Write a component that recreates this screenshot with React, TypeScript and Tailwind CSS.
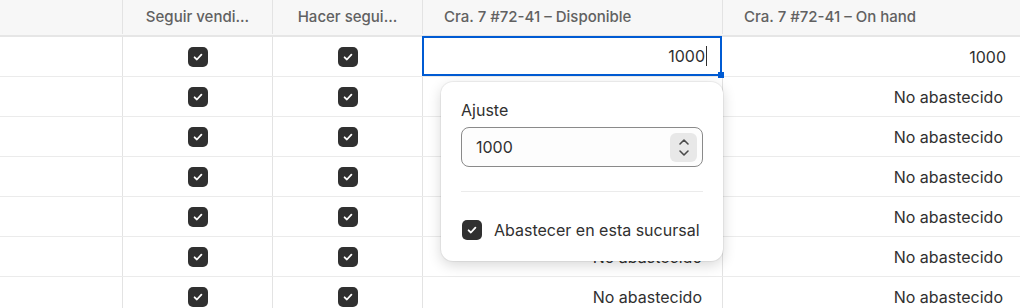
import React from 'react';

const font = { fontFamily: 'Inter, "Noto Sans", sans-serif' };

const Check: React.FC<{ className?: string }> = ({ className }) => (
  <span className={`flex h-5 w-5 shrink-0 items-center justify-center rounded-[5px] bg-[#303030] ${className ?? ''}`}>
    <svg width="12" height="12" viewBox="0 0 12 12" fill="none">
      <path d="M2.6 6.3 4.9 8.5 9.4 3.6" stroke="#fff" strokeWidth="1.8" strokeLinecap="round" strokeLinejoin="round" />
    </svg>
  </span>
);

const rows = Array.from({ length: 7 }, (_, i) => i);

const App: React.FC = () => {
  return (
    <div className="relative h-[308px] w-[1020px] overflow-hidden bg-white text-[#303030]" style={font}>
      {/* header */}
      <div className="flex h-[37px] border-b-2 border-[#e6e6e6] bg-[#f7f7f7] pb-px text-[15px] font-medium text-[#616161]">
        <div className="w-[123px] shrink-0 border-r border-[#e3e3e3]" />
        <div className="flex w-[150px] shrink-0 items-center justify-center border-r border-[#e3e3e3]">Seguir vendi...</div>
        <div className="flex w-[150px] shrink-0 items-center justify-center border-r border-[#e3e3e3]">Hacer segui...</div>
        <div className="flex w-[300px] shrink-0 items-center border-r border-[#e3e3e3] pl-[21px]">Cra. 7 #72-41 – Disponible</div>
        <div className="flex w-[300px] shrink-0 items-center pl-[21px]">Cra. 7 #72-41 – On hand</div>
      </div>

      {rows.map(i => (
        <div key={i} className="flex h-[40px] border-b border-[#ebebeb] text-[16px]">
          <div className="w-[123px] shrink-0 border-r border-[#e3e3e3]" />
          <div className="flex w-[150px] shrink-0 items-center justify-center border-r border-[#e3e3e3]">
            <Check />
          </div>
          <div className="flex w-[150px] shrink-0 items-center justify-center border-r border-[#e3e3e3]">
            <Check />
          </div>
          {i === 0 ? (
            <div className="relative flex w-[300px] shrink-0 items-center justify-end border-2 border-[#005bd3] pr-[13px] -mt-px -ml-px">
              <span>1000</span>
              <span className="ml-px h-[20px] w-px bg-[#303030]" />
              <span className="absolute -bottom-[4px] -right-[4px] h-[6px] w-[6px] bg-[#005bd3]" />
            </div>
          ) : (
            <div className="flex w-[300px] shrink-0 items-center justify-end border-r border-[#e3e3e3] pr-[20px]">
              No abastecido
            </div>
          )}
          <div className="flex w-[300px] shrink-0 items-center justify-end pr-[16px]">
            {i === 0 ? <span>1000</span> : <span className="pr-[4px]">No abastecido</span>}
          </div>
        </div>
      ))}

      {/* popover */}
      <div className="absolute left-[441px] top-[82px] flex h-[179px] w-[282px] flex-col rounded-[12px] bg-white px-5 pt-4 shadow-[0_4px_14px_rgba(0,0,0,0.16),0_0_0_1px_rgba(0,0,0,0.05)]">
        <div className="text-[16px] leading-6">Ajuste</div>
        <div className="mt-[5px] flex h-[40px] items-center rounded-[8px] border border-[#8a8a8a] bg-[#fdfdfd] pl-[14px] pr-[5px] text-[16px]">
          <span className="flex-1">1000</span>
          <span className="flex h-[29px] w-[27px] flex-col items-center justify-center rounded-[6px] bg-[#e8e8e8]">
            <svg width="12" height="8" viewBox="0 0 12 8" fill="none">
              <path d="M2 6 6 2l4 4" stroke="#4a4a4a" strokeWidth="1.6" strokeLinecap="round" strokeLinejoin="round" />
            </svg>
            <svg width="12" height="8" viewBox="0 0 12 8" fill="none" className="mt-[3px]">
              <path d="M2 2l4 4 4-4" stroke="#4a4a4a" strokeWidth="1.6" strokeLinecap="round" strokeLinejoin="round" />
            </svg>
          </span>
        </div>
        <div className="mt-6 h-px bg-[#ebebeb]" />
        <div className="mt-[26px] flex h-6 items-center gap-3 whitespace-nowrap pl-px text-[16px]">
          <Check />
          <span>Abastecer en esta sucursal</span>
        </div>
      </div>
    </div>
  );
};

export default App;
